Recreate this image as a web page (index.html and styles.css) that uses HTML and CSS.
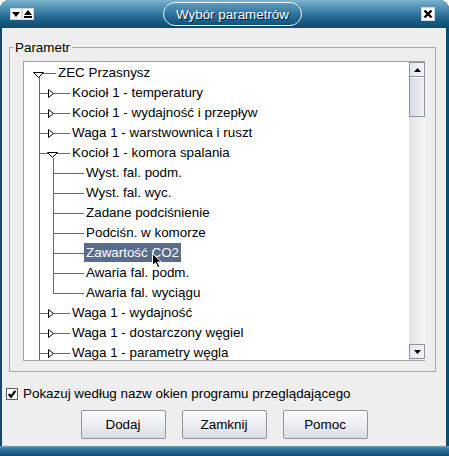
FILE: index.html
```html
<!DOCTYPE html>
<html lang="pl">
<head>
<meta charset="utf-8">
<title>Wybór parametrów</title>
<link rel="stylesheet" href="styles.css">
</head>
<body>
<div class="window">
  <div class="titlebar">
    <span class="tb-btn"><svg width="8" height="8" viewBox="0 0 8 8"><path d="M0 2 L8 2 L4 7 Z" fill="#000"/></svg></span>
    <span class="tb-btn"><svg width="8" height="8" viewBox="0 0 8 8"><path d="M0 5 L8 5 L4 0 Z" fill="#000"/><rect x="0" y="6" width="8" height="2" fill="#000"/></svg></span>
    <div class="title-pill">Wybór parametrów</div>
    <span class="tb-close"><svg width="10" height="10" viewBox="0 0 10 10"><path d="M1.5 1.5 L8.5 8.5 M8.5 1.5 L1.5 8.5" stroke="#000" stroke-width="2.4"/></svg></span>
  </div>
  <div class="body">
    <div class="group">
      <span class="group-label">Parametr</span>
      <div class="tree-box">
        <div class="tree">
          <div class="row">
            <span class="root-cell"><svg class="tg-open" width="11" height="6" viewBox="0 0 11 6"><path d="M0.5 0.5 L10.5 0.5 L5.5 5.5 Z" fill="#fff" stroke="#000"/></svg></span>
            <span class="label">ZEC Przasnysz</span>
          </div>
          <div class="row">
            <span class="elbow"><svg class="tg-closed" width="6" height="9" viewBox="0 0 6 9"><path d="M0.5 0.5 L5.5 4.5 L0.5 8.5 Z" fill="#fff" stroke="#000"/></svg></span>
            <span class="label">Kocioł 1 - temperatury</span>
          </div>
          <div class="row">
            <span class="elbow"><svg class="tg-closed" width="6" height="9" viewBox="0 0 6 9"><path d="M0.5 0.5 L5.5 4.5 L0.5 8.5 Z" fill="#fff" stroke="#000"/></svg></span>
            <span class="label">Kocioł 1 - wydajność i przepływ</span>
          </div>
          <div class="row">
            <span class="elbow"><svg class="tg-closed" width="6" height="9" viewBox="0 0 6 9"><path d="M0.5 0.5 L5.5 4.5 L0.5 8.5 Z" fill="#fff" stroke="#000"/></svg></span>
            <span class="label">Waga 1 - warstwownica i ruszt</span>
          </div>
          <div class="row">
            <span class="elbow open"><svg class="tg-open" width="11" height="6" viewBox="0 0 11 6"><path d="M0.5 0.5 L10.5 0.5 L5.5 5.5 Z" fill="#fff" stroke="#000"/></svg></span>
            <span class="label">Kocioł 1 - komora spalania</span>
          </div>
          <div class="row">
            <span class="guide"></span><span class="elbow"></span>
            <span class="label">Wyst. fal. podm.</span>
          </div>
          <div class="row">
            <span class="guide"></span><span class="elbow"></span>
            <span class="label">Wyst. fal. wyc.</span>
          </div>
          <div class="row">
            <span class="guide"></span><span class="elbow"></span>
            <span class="label">Zadane podciśnienie</span>
          </div>
          <div class="row">
            <span class="guide"></span><span class="elbow"></span>
            <span class="label">Podciśn. w komorze</span>
          </div>
          <div class="row">
            <span class="guide"></span><span class="elbow"></span>
            <span class="label selected">Zawartość CO2</span>
          </div>
          <div class="row">
            <span class="guide"></span><span class="elbow"></span>
            <span class="label">Awaria fal. podm.</span>
          </div>
          <div class="row">
            <span class="guide"></span><span class="elbow last"></span>
            <span class="label">Awaria fal. wyciągu</span>
          </div>
          <div class="row">
            <span class="elbow"><svg class="tg-closed" width="6" height="9" viewBox="0 0 6 9"><path d="M0.5 0.5 L5.5 4.5 L0.5 8.5 Z" fill="#fff" stroke="#000"/></svg></span>
            <span class="label">Waga 1 - wydajność</span>
          </div>
          <div class="row">
            <span class="elbow"><svg class="tg-closed" width="6" height="9" viewBox="0 0 6 9"><path d="M0.5 0.5 L5.5 4.5 L0.5 8.5 Z" fill="#fff" stroke="#000"/></svg></span>
            <span class="label">Waga 1 - dostarczony węgiel</span>
          </div>
          <div class="row">
            <span class="elbow"><svg class="tg-closed" width="6" height="9" viewBox="0 0 6 9"><path d="M0.5 0.5 L5.5 4.5 L0.5 8.5 Z" fill="#fff" stroke="#000"/></svg></span>
            <span class="label">Waga 1 - parametry węgla</span>
          </div>
        </div>
        <div class="scrollbar">
          <span class="sb-btn"><svg width="7" height="4" viewBox="0 0 7 4"><path d="M0 4 L7 4 L3.5 0 Z" fill="#000"/></svg></span>
          <span class="sb-thumb"></span>
          <span class="sb-track"></span>
          <span class="sb-btn"><svg width="7" height="4" viewBox="0 0 7 4"><path d="M0 0 L7 0 L3.5 4 Z" fill="#000"/></svg></span>
        </div>
        <svg class="cursor" width="11" height="16" viewBox="0 0 11 16"><path d="M0.5 0.5 L0.5 12.5 L3.5 9.8 L5.8 14.8 L7.8 13.9 L5.6 9 L9.5 9 Z" fill="#000" stroke="#fff" stroke-width="1"/></svg>
      </div>
    </div>
    <label class="check">
      <svg class="check-box" width="12" height="12" viewBox="0 0 12 12"><rect x="0.5" y="0.5" width="11" height="11" fill="#fff" stroke="#5e5e5e"/><path d="M2.8 6 L5 8.8 L9.4 2.8" fill="none" stroke="#000" stroke-width="2.2"/></svg>
      <span>Pokazuj według nazw okien programu przeglądającego</span>
    </label>
    <div class="buttons">
      <span class="btn" role="button">Dodaj</span>
      <span class="btn" role="button">Zamknij</span>
      <span class="btn" role="button">Pomoc</span>
    </div>
  </div>
  <div class="frame-bottom"></div>
</div>
</body>
</html>
```
FILE: styles.css
```css
html, body {
  margin: 0;
  padding: 0;
  background: #ffffff;
}
body {
  font-family: "Liberation Sans", Arial, sans-serif;
  font-size: 13.4px;
  color: #000;
}
.window {
  width: 449px;
  height: 456px;
  display: flex;
  flex-direction: column;
  background: #0d4b71;
  border-radius: 9px 9px 0 0;
  overflow: hidden;
}
.titlebar {
  height: 28px;
  flex: none;
  display: flex;
  align-items: center;
  padding-left: 11px;
  background: linear-gradient(180deg, #7cb2ce 0%, #4d8db1 30%, #1f628a 68%, #0b4a70 100%);
}
.tb-btn {
  width: 10px;
  height: 10px;
  margin-right: 2px;
  background: #fff;
  display: flex;
  align-items: center;
  justify-content: center;
  box-shadow: 0 0 0 1px #c9d8e2;
}
.title-pill {
  margin-left: 128px;
  width: 139px;
  height: 24px;
  box-sizing: border-box;
  border: 1.5px solid #f2f7fa;
  border-radius: 12px;
  background: linear-gradient(180deg, #5c9bbf 0%, #2f74a0 50%, #0f5279 100%);
  color: #fff;
  text-shadow: 1px 1px 0 #0a1a26;
  display: flex;
  align-items: center;
  justify-content: center;
  font-size: 13.4px;
}
.tb-close {
  margin-left: auto;
  margin-right: 15px;
  width: 12px;
  height: 12px;
  background: #fff;
  display: flex;
  align-items: center;
  justify-content: center;
  box-shadow: 0 0 0 1px #c9d8e2;
}
.body {
  flex: 1;
  margin: 0 3px 0 2px;
  background: #eeeeee;
  display: flex;
  flex-direction: column;
}
.group {
  position: relative;
  margin: 19px 10px 0 7px;
  height: 325px;
  box-sizing: border-box;
  border: 1px solid #a9a9a9;
  padding: 13px 10px 10px 13px;
}
.group-label {
  position: absolute;
  top: -8px;
  left: 3px;
  padding: 0 2px;
  line-height: 15px;
  background: #eeeeee;
}
.tree-box {
  position: relative;
  height: 300px;
  box-sizing: border-box;
  border: 1px solid #a0a0a0;
  border-right: 0;
  background: #fff;
  display: flex;
}
.tree {
  flex: 1;
  padding: 1px 0 0 8px;
  overflow: hidden;
}
.row {
  height: 20px;
  display: flex;
  white-space: nowrap;
}
.guide {
  width: 14px;
  flex: none;
  position: relative;
}
.guide::before {
  content: "";
  position: absolute;
  left: 7px;
  top: 0;
  bottom: 0;
  border-left: 1px solid #6a6a6a;
}
.elbow {
  width: 38px;
  flex: none;
  position: relative;
  display: flex;
  align-items: flex-start;
}
.elbow::before {
  content: "";
  position: absolute;
  left: 7px;
  top: 0;
  bottom: 0;
  border-left: 1px solid #6a6a6a;
}
.elbow.last::before {
  bottom: 10px;
}
.elbow::after {
  content: "";
  position: absolute;
  left: 7px;
  right: 0;
  top: 10px;
  border-top: 1px solid #6a6a6a;
}
.elbow.open .tg-open {
  margin-left: 15px;
}
.elbow.open {
  background: linear-gradient(#6a6a6a, #6a6a6a) no-repeat 21px 15px / 1px 5px;
}
.root-cell {
  width: 24px;
  flex: none;
  position: relative;
  display: flex;
  align-items: flex-start;
}
.root-cell::before {
  content: "";
  position: absolute;
  left: 7px;
  top: 14px;
  bottom: 0;
  border-left: 1px solid #6a6a6a;
}
.root-cell::after {
  content: "";
  position: absolute;
  left: 11px;
  right: 0;
  top: 10px;
  border-top: 1px solid #6a6a6a;
}
.tg-open {
  position: relative;
  z-index: 1;
  margin-left: 1px;
  margin-top: 9px;
}
.tg-closed {
  position: relative;
  z-index: 1;
  margin-left: 16px;
  margin-top: 6px;
}
.label {
  height: 19px;
  line-height: 19px;
  padding: 0 2px;
}
.label.selected {
  background: #5a6b8d;
  color: #fff;
}
.scrollbar {
  width: 16px;
  flex: none;
  display: flex;
  flex-direction: column;
  padding-bottom: 1px;
  background: linear-gradient(90deg, #e2e2e2, #f6f6f6);
}
.sb-btn {
  height: 15px;
  flex: none;
  box-sizing: border-box;
  border: 1px solid #8a93a3;
  background: linear-gradient(90deg, #e4e7ec, #f2f3f6);
  display: flex;
  align-items: center;
  justify-content: center;
}
.sb-thumb {
  height: 40px;
  flex: none;
  box-sizing: border-box;
  border: 1px solid #8a93a3;
  border-top: 0;
  background: linear-gradient(90deg, #d6dbe4, #eef0f4);
  box-shadow: inset 0 1px 0 #ffffff;
}
.sb-track {
  flex: 1;
}
.cursor {
  position: absolute;
  left: 128px;
  top: 191px;
}
.check {
  display: flex;
  align-items: center;
  height: 15px;
  margin: 14px 0 0 4px;
}
.check-box {
  margin-right: 5px;
}
.buttons {
  display: flex;
  justify-content: center;
  gap: 16px;
  margin-top: 9px;
}
.btn {
  width: 85px;
  height: 29px;
  box-sizing: border-box;
  border: 1px solid #8d97a4;
  border-radius: 2px;
  background: linear-gradient(180deg, #fbfbfc 0%, #eceef1 50%, #d9dce2 100%);
  display: flex;
  align-items: center;
  justify-content: center;
  font-weight: 400;
  color: #000;
}
.frame-bottom {
  height: 10px;
  flex: none;
  background: linear-gradient(180deg, #6b9cba 0%, #3b7aa0 25%, #23668e 60%, #0f4d74 100%);
}
```
